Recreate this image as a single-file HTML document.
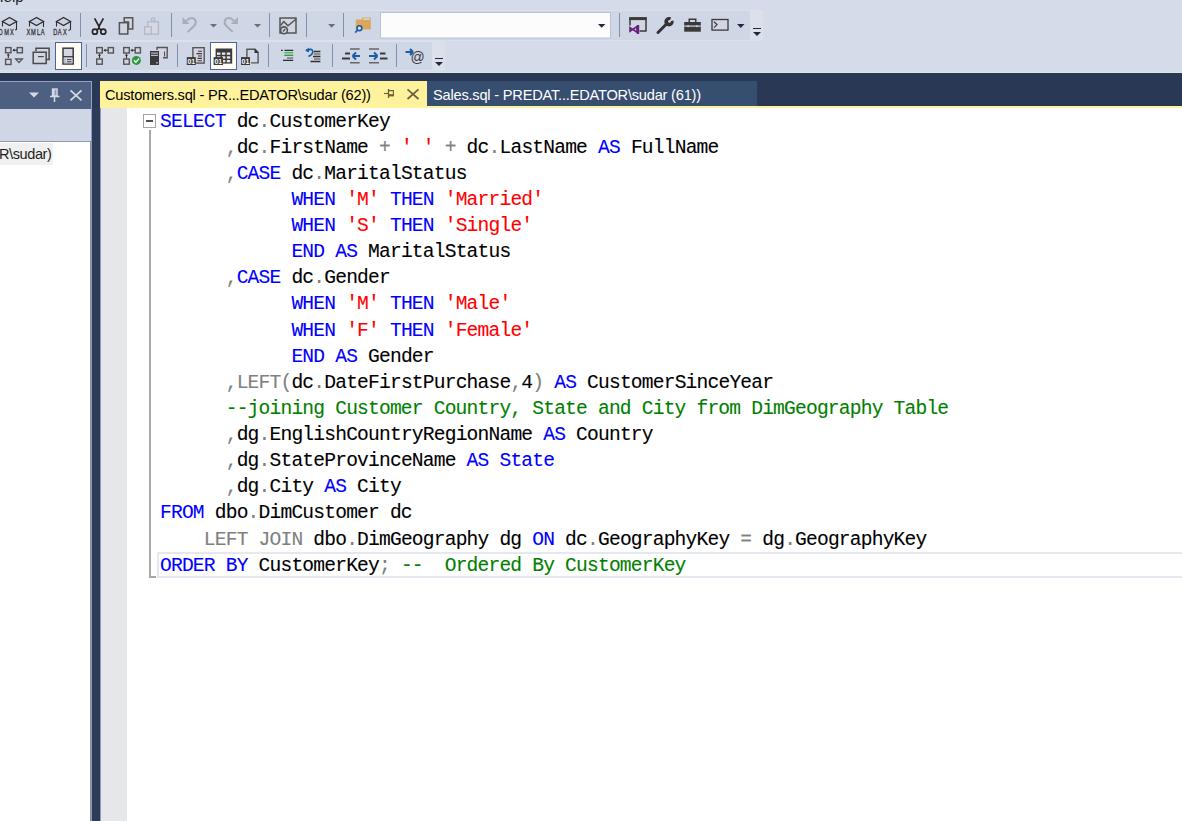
<!DOCTYPE html>
<html><head><meta charset="utf-8">
<style>
html,body{margin:0;padding:0;width:1182px;height:821px;overflow:hidden;background:#d6dbe9;font-family:"Liberation Sans",sans-serif;}
.a{position:absolute;}
#menu{left:-7.3px;top:-12.2px;font-size:15px;color:#1e1e1e;}
#tb1o{left:0;top:10px;width:763px;height:31px;background:#dce0eb;}
#tb1{left:0;top:11px;width:750px;height:29px;background:#cfd6e5;}
#tb2o{left:0;top:41px;width:445px;height:30px;background:#dce0eb;}
#tb2{left:0;top:42px;width:432px;height:28px;background:#cfd6e5;}
#hl{left:0;top:72px;width:1182px;height:1px;background:#dfe3ee;}
#dark{left:0;top:73px;width:1182px;height:748px;background:#293955;}
#pstrip{left:92px;top:108px;width:8px;height:713px;background:#2b3b58;}
#ptitle{left:0;top:81px;width:91px;height:27px;background:#4d6082;border-top:1px solid #94a2c4;border-right:1px solid #94a2c4;box-sizing:content-box;}
#ptool{left:0;top:109px;width:91px;height:32px;background:#cfd6e5;}
#pcont{left:0;top:141px;width:90px;height:680px;background:#fff;border-top:1px solid #8e9bb2;}
#pbr1{left:90px;top:141px;width:1px;height:680px;background:#888c94;}
#pbr2{left:91px;top:108px;width:1px;height:713px;background:#8c9bc0;}
#tabA{left:100px;top:81px;width:327px;height:27px;background:#fff29d;}
#tabB{left:427px;top:81px;width:330px;height:25px;background:#364e6f;}
#ybar{left:100px;top:106px;width:1082px;height:2px;background:#fff29d;}
#ed{left:100px;top:108px;width:1082px;height:713px;background:#fff;}
#edl{left:100px;top:108px;width:1px;height:713px;background:#8a9ac0;}
#marg{left:101px;top:108px;width:26px;height:713px;background:#e6e7e8;}
.tabt{font-size:14.6px;line-height:20px;white-space:nowrap;letter-spacing:-0.2px;}
#code{left:160px;top:108.6px;font-family:"Liberation Mono",monospace;font-size:19.6px;letter-spacing:-0.81px;-webkit-text-stroke:0.1px;line-height:26.13px;white-space:pre;color:#000;margin:0;}
.k{color:#0000ff}.s{color:#ff0000}.c{color:#008000}.g{color:#808080}
#cur{left:157px;top:552px;width:1030px;height:22px;border:2px solid #e6e8f0;}
#foldbox{left:143px;top:114px;width:11px;height:12px;border:1px solid #a5a5a5;background:#fff;}
#foldminus{left:146px;top:120px;width:7px;height:2px;background:#505050;}
#foldline{left:149px;top:130px;width:2px;height:448px;background:#a8a8a8;}
#foldend{left:149px;top:576px;width:7px;height:2px;background:#a8a8a8;}
.sep{position:absolute;width:1px;background:#8796b4;}
</style></head><body>
<div class="a" id="menu">Help</div>
<div class="a" id="tb1o"></div><div class="a" id="tb1"></div>
<div class="a" id="tb2o"></div><div class="a" id="tb2"></div>
<div class="a" id="hl"></div>
<div class="a" id="dark"></div>
<div class="a" id="pstrip"></div>
<div class="a" id="ptitle"></div>
<div class="a" id="ptool"></div>
<div class="a" id="pcont"></div>
<div class="a" id="pbr1"></div><div class="a" id="pbr2"></div>
<div class="a" id="tabA"></div>
<div class="a" id="tabB"></div>
<div class="a" id="ybar"></div>
<div class="a" id="ed"></div>
<div class="a" id="edl"></div>
<div class="a" id="marg"></div>
<div class="a tabt" style="left:105px;top:85px;color:#000;">Customers.sql - PR...EDATOR\sudar (62))</div>
<div class="a tabt" style="left:433px;top:85px;color:#fff;">Sales.sql - PREDAT...EDATOR\sudar (61))</div>
<div class="a" style="left:0;top:143px;width:53px;height:22px;background:#f0f0f0;"></div>
<div class="a" style="left:-1px;top:145px;font-size:14.5px;line-height:18px;letter-spacing:-0.4px;color:#1e1e1e;">R\sudar)</div>
<div class="a" id="cur"></div>
<div class="a" id="foldbox"></div><div class="a" id="foldminus"></div>
<div class="a" id="foldline"></div><div class="a" id="foldend"></div>
<pre class="a" id="code"><span class="k">SELECT</span> dc<span class="g">.</span>CustomerKey
      <span class="g">,</span>dc<span class="g">.</span>FirstName <span class="g">+</span> <span class="s">' '</span> <span class="g">+</span> dc<span class="g">.</span>LastName <span class="k">AS</span> FullName
      <span class="g">,</span><span class="k">CASE</span> dc<span class="g">.</span>MaritalStatus
            <span class="k">WHEN</span> <span class="s">'M'</span> <span class="k">THEN</span> <span class="s">'Married'</span>
            <span class="k">WHEN</span> <span class="s">'S'</span> <span class="k">THEN</span> <span class="s">'Single'</span>
            <span class="k">END</span> <span class="k">AS</span> MaritalStatus
      <span class="g">,</span><span class="k">CASE</span> dc<span class="g">.</span>Gender
            <span class="k">WHEN</span> <span class="s">'M'</span> <span class="k">THEN</span> <span class="s">'Male'</span>
            <span class="k">WHEN</span> <span class="s">'F'</span> <span class="k">THEN</span> <span class="s">'Female'</span>
            <span class="k">END</span> <span class="k">AS</span> Gender
      <span class="g">,LEFT(</span>dc<span class="g">.</span>DateFirstPurchase<span class="g">,</span>4<span class="g">)</span> <span class="k">AS</span> CustomerSinceYear
      <span class="c">--joining Customer Country, State and City from DimGeography Table</span>
      <span class="g">,</span>dg<span class="g">.</span>EnglishCountryRegionName <span class="k">AS</span> Country
      <span class="g">,</span>dg<span class="g">.</span>StateProvinceName <span class="k">AS</span> <span class="k">State</span>
      <span class="g">,</span>dg<span class="g">.</span>City <span class="k">AS</span> City
<span class="k">FROM</span> dbo<span class="g">.</span>DimCustomer dc
    <span class="g">LEFT JOIN</span> dbo<span class="g">.</span>DimGeography dg <span class="k">ON</span> dc<span class="g">.</span>GeographyKey <span class="g">=</span> dg<span class="g">.</span>GeographyKey
<span class="k">ORDER BY</span> CustomerKey<span class="g">;</span> <span class="c">--  Ordered By CustomerKey</span></pre>
<!--ICONS-->
<svg class="a" style="left:0;top:0" width="1182" height="110" viewBox="0 0 1182 110">
<g fill="none" stroke-linecap="butt">
<!-- separators row1 -->
<g stroke="#8290ac" stroke-width="1">
<line x1="80.5" y1="13" x2="80.5" y2="37"/>
<line x1="171.5" y1="13" x2="171.5" y2="37"/>
<line x1="269.5" y1="13" x2="269.5" y2="37"/>
<line x1="306.5" y1="13" x2="306.5" y2="37"/>
<line x1="343.5" y1="13" x2="343.5" y2="37"/>
<line x1="619.5" y1="13" x2="619.5" y2="37"/>
<!-- row2 -->
<line x1="86.5" y1="44" x2="86.5" y2="67"/>
<line x1="177.5" y1="44" x2="177.5" y2="67"/>
<line x1="268.5" y1="44" x2="268.5" y2="67"/>
<line x1="332.5" y1="44" x2="332.5" y2="67"/>
<line x1="396.5" y1="44" x2="396.5" y2="67"/>
</g>
<!-- cubes -->
<g stroke="#2d2d2d" stroke-width="1.1">
<path d="M9.5 17.5 L2.5 21.5 L9.5 25.5 L16.5 21.5 Z" fill="#cdd0e0" stroke-width="1.3"/>
<path d="M2.5 21.5 V26.5 M16.5 21.5 V29.5 L15 30"/>
<path d="M36.5 17.5 L29.5 21.5 L36.5 25.5 L43.5 21.5 Z" fill="#cdd0e0" stroke-width="1.3"/>
<path d="M29.5 21.5 V26.5 M43.5 21.5 V27"/>
<path d="M63.5 17.5 L56.5 21.5 L63.5 25.5 L70.5 21.5 Z" fill="#cdd0e0" stroke-width="1.3"/>
<path d="M56.5 21.5 V26.5 M70.5 21.5 V29.5 L68.5 30.5"/>
</g>
<g fill="#3c3c3c" stroke="#3c3c3c" stroke-width="0.35" font-family="Liberation Sans" font-size="8.4">
<text transform="translate(-1.5 34.8) scale(0.68 1)">D</text>
<text transform="translate(4.3 34.8) scale(0.68 1)">M</text>
<text transform="translate(10.0 34.8) scale(0.68 1)">X</text>
<text transform="translate(26.4 34.8) scale(0.68 1)">X</text>
<text transform="translate(31.0 34.8) scale(0.68 1)">M</text>
<text transform="translate(37.0 34.8) scale(0.68 1)">L</text>
<text transform="translate(40.8 34.8) scale(0.68 1)">A</text>
<text transform="translate(53.2 34.8) scale(0.68 1)">D</text>
<text transform="translate(57.8 34.8) scale(0.68 1)">A</text>
<text transform="translate(63.0 34.8) scale(0.68 1)">X</text>
</g>
<!-- scissors -->
<g stroke="#262626" stroke-width="1.7">
<path d="M94.6 18.4 L99 26.5 L103.4 18.4"/>
<path d="M99 26 V28.5"/>
<circle cx="94.9" cy="31.7" r="2.5" fill="#d8d9e6"/>
<circle cx="103.3" cy="31.7" r="2.5" fill="#d8d9e6"/>
<path d="M96.8 30 L99 28.3 L101.3 30"/>
</g>
<!-- copy -->
<g stroke="#555" stroke-width="1.5">
<path d="M124.2 22 V17.8 H132.7 V29 H128.5 V22 Z" fill="#d4d5e3"/>
<rect x="119.4" y="22.7" width="8.4" height="11.3" fill="#d4d5e3"/>
</g>
<!-- paste disabled -->
<g stroke="#b4b8c6" stroke-width="1.3">
<rect x="147.8" y="21.8" width="10.6" height="12.3" fill="#d5d9e5"/>
<circle cx="153.1" cy="19.6" r="1.8" fill="#d5d9e5"/>
<rect x="144.6" y="26.8" width="6.7" height="7.3" fill="#d5d9e5"/>
</g>
<!-- undo / redo -->
<g stroke="#a9adb9" stroke-width="2">
<path d="M187.7 32 L194.2 25.8 C197 23 196 18 191.5 18 C189.5 18 187.8 19.3 186.5 21"/>
<path d="M232.7 32 L226.2 25.8 C223.4 23 224.4 18 228.9 18 C230.9 18 232.6 19.3 233.9 21"/>
</g>
<g fill="#a9adb9">
<path d="M182.5 17 V24 H189.5 Z"/>
<path d="M237.9 17 V24 H230.9 Z"/>
</g>
<g fill="#6e6e72">
<path d="M210 23.9 H217.1 L213.55 27.6 Z"/>
<path d="M254 23.9 H261.1 L257.55 27.6 Z"/>
<path d="M328.1 23.9 H335.2 L331.65 27.8 Z"/>
</g>
<!-- chart icon -->
<g stroke="#555" stroke-width="1.5">
<rect x="280" y="18" width="16" height="15" fill="#d4d5e3"/>
<path d="M280.5 25.5 L283.8 21.6 L288 25.8 L295.8 19.2"/>
<circle cx="284" cy="30.3" r="3.4" fill="#d4d5e3" stroke-width="1.6"/>
<path d="M283 31.4 L285.2 29"/>
</g>
<!-- folder search -->
<path d="M355.8 19.5 H361.5 L362.5 17.6 H370.8 V29.6 H355.8 Z" fill="#d9a85c"/>
<rect x="363.2" y="18.3" width="6.4" height="1.6" fill="#c8e0cc"/>
<g stroke="#1a5ca8" stroke-width="1.6">
<circle cx="359.4" cy="28.2" r="2.4" fill="#dfe3ee"/>
<path d="M357.6 30 L355.2 32.6"/>
</g>
<!-- combo -->
<rect x="380.5" y="12.5" width="230" height="25.5" fill="#fcfcfc" stroke="#b9c2d6" stroke-width="1"/>
<path d="M598 24 H605.4 L601.7 27.8 Z" fill="#1b2942"/>
<!-- vs window -->
<g stroke="#3a3a3a" stroke-width="1.5">
<path d="M630 25.5 V18 H646 V31 H639.5" fill="#d4d5e3"/>
</g>
<rect x="629.3" y="17.3" width="17.3" height="2.8" fill="#3a3a3a"/>
<path d="M630 27.6 L637 32.2 V26.6 L630 31.2 Z" fill="none" stroke="#68217a" stroke-width="1.6"/>
<rect x="636.8" y="25" width="2.4" height="9" fill="#68217a"/>
<!-- wrench -->
<path d="M658 32.5 L666 24.5" stroke="#333" stroke-width="3" stroke-linecap="round"/>
<circle cx="669" cy="21.8" r="4.7" fill="#333"/>
<path d="M669.3 21.5 L672.2 15.5 L676 17.5 L675.5 20 Z" fill="#cfd6e5"/>
<circle cx="669.5" cy="21.4" r="1.3" fill="#cfd6e5"/>
<!-- toolbox -->
<g fill="#3a3a3a">
<rect x="684.2" y="22" width="16.6" height="9.7"/>
<path d="M688.5 22 V18.6 H696.5 V22 H695 V20 H690 V22 Z"/>
</g>
<rect x="684.2" y="25.5" width="16.6" height="1.2" fill="#cfd6e5"/>
<rect x="687.5" y="25" width="1.2" height="2.2" fill="#cfd6e5"/><rect x="696.3" y="25" width="1.2" height="2.2" fill="#cfd6e5"/>
<!-- terminal -->
<rect x="712" y="19.5" width="16" height="10.6" fill="#d4d5e3" stroke="#3a3a3a" stroke-width="1.3"/>
<path d="M714 21.7 L717 24.6 L714 27.6" stroke="#3a3a3a" stroke-width="1.2"/>
<path d="M737 24 H744.5 L740.75 28 Z" fill="#1b2942"/>
<!-- overflow row1 -->
<rect x="753" y="28" width="8" height="1" fill="#1b2942"/>
<path d="M753 32 H761 L757 36 Z" fill="#1b2942"/>

<!-- ROW 2 -->
<!-- plan diamond -->
<g stroke="#555" stroke-width="1.4" fill="#d4d5e3">
<rect x="5.6" y="47.6" width="5.4" height="5.2"/>
<rect x="17.2" y="47.6" width="5.2" height="5.2"/>
<rect x="5.6" y="59.3" width="5.4" height="5.2"/>
</g>
<path d="M19 62.6 L15.6 59 H22.4 Z" fill="none" stroke="#555" stroke-width="1.3"/>
<g stroke="#333" stroke-width="1.1"><path d="M13 50.2 H17"/><path d="M8.3 54 V58"/></g>
<g fill="#333"><path d="M12.4 50.2 L14.6 48.6 V51.8 Z"/><path d="M8.3 53.4 L6.8 55.6 H9.8 Z"/></g>
<!-- windows -->
<g stroke="#4a4a4a" stroke-width="1.5">
<path d="M36 51 V48.3 H49.1 V59.6 H46"/>
<rect x="33.2" y="52.2" width="13" height="11.3" fill="#d4d5e3"/>
<path d="M38 56.6 H43.8" stroke-width="1.2"/>
</g>
<!-- selected button 1 -->
<rect x="55.5" y="42.5" width="26" height="27" fill="#fffcf4" stroke="#4b6597" stroke-width="1"/>
<g stroke="#3a3a3a" stroke-width="1.5">
<rect x="63" y="48.2" width="10.2" height="15.8" fill="#d4d5e3"/>
<path d="M63 56.8 H73.2"/>
</g>
<rect x="63.8" y="57.6" width="8.6" height="5.7" fill="#d4d5e3"/>
<g stroke="#3a3a3a" stroke-width="1"><path d="M67 59.6 H71.5 M67 61.8 H71.5"/></g>
<g fill="#777"><rect x="64.5" y="59.2" width="1" height="1"/><rect x="64.5" y="61.4" width="1" height="1"/></g>
<!-- plan x2 -->
<g stroke="#555" stroke-width="1.4" fill="#d4d5e3">
<rect x="96.7" y="47.6" width="5.6" height="5.4"/>
<rect x="108.2" y="47.6" width="5.2" height="5.4"/>
<rect x="96.7" y="59" width="5.6" height="5.2"/>
<rect x="123.7" y="47.6" width="5.6" height="5.4"/>
<rect x="135.2" y="47.6" width="5.2" height="5.4"/>
<rect x="123.7" y="59" width="5.6" height="5.2"/>
</g>
<g stroke="#333" stroke-width="1.1"><path d="M104 50.3 H108 M99.5 54.5 V58.5 M131 50.3 H135 M126.5 54.5 V58.5"/></g>
<g fill="#333"><path d="M103.4 50.3 L105.6 48.7 V51.9 Z M99.5 53.6 L98 55.8 H101 Z M130.4 50.3 L132.6 48.7 V51.9 Z M126.5 53.6 L125 55.8 H128 Z"/></g>
<circle cx="136.4" cy="60.4" r="4.5" fill="#2a9a3b"/>
<path d="M134 60.3 L135.9 62.2 L139 58.6" stroke="#fff" stroke-width="1.4"/>
<!-- server + chart -->
<path d="M157 50 V47.5 H167.2 V57.8 H163" stroke="#555" stroke-width="1.4" fill="#d4d5e3"/>
<path d="M164.6 51.5 V56.5" stroke="#444" stroke-width="1"/>
<rect x="150" y="51" width="9" height="14" fill="#3a3a3a"/>
<rect x="151" y="52.5" width="7" height="1.2" fill="#b8bcc8"/>
<rect x="151" y="54.8" width="7" height="1.2" fill="#b8bcc8"/>
<rect x="156.2" y="62" width="1.5" height="1.5" fill="#b8bcc8"/>
<!-- results to text -->
<rect x="192.9" y="47.7" width="11.3" height="15.4" fill="#d4d5e3" stroke="#555" stroke-width="1.4"/>
<g stroke="#3a3a3a" stroke-width="1.1"><path d="M198 51.2 H202 M196.5 53.6 H202 M198 56 H202 M197.5 58.4 H202 M197.5 60.8 H202"/></g>
<!-- selected button 2 -->
<rect x="210.5" y="42.5" width="26" height="27" fill="#fffcf4" stroke="#4b6597" stroke-width="1"/>
<rect x="215.6" y="48.5" width="16.6" height="15.1" fill="#3a3a3a"/>
<g fill="#e8e8ee">
<rect x="217" y="52.5" width="3.4" height="2.3"/><rect x="221.9" y="52.5" width="3.4" height="2.3"/><rect x="226.8" y="52.5" width="3.4" height="2.3"/>
<rect x="217" y="56.3" width="3.4" height="2.3"/><rect x="221.9" y="56.3" width="3.4" height="2.3"/><rect x="226.8" y="56.3" width="3.4" height="2.3"/>
<rect x="221.9" y="60" width="3.4" height="2.3"/><rect x="226.8" y="60" width="3.4" height="2.3"/>
</g>
<!-- file -->
<path d="M246.9 57 V49.2 H255 L258.1 52.3 V62.9 H251" fill="none" stroke="#555" stroke-width="1.4"/>
<path d="M254.5 48.6 L258.8 52.9 H254.5 Z" fill="#333"/>
<!-- 01 badges -->
<g fill="#3a3a3a">
<rect x="186.8" y="57.1" width="9" height="7.9"/>
<rect x="213.6" y="57.1" width="9.4" height="7.9"/>
<rect x="241" y="57.1" width="9" height="7.9"/>
</g>
<g fill="#fff" font-family="Liberation Sans" font-weight="bold" font-size="7.6">
<text x="187.4" y="64" textLength="7.8" lengthAdjust="spacingAndGlyphs">01</text>
<text x="214.4" y="64" textLength="7.8" lengthAdjust="spacingAndGlyphs">01</text>
<text x="241.6" y="64" textLength="7.8" lengthAdjust="spacingAndGlyphs">01</text>
</g>
<!-- comment -->
<g stroke-width="1.3">
<path d="M281 50.4 H282.8 M284.5 50.4 H293.2 M283 60.4 H293.2" stroke="#2e2e2e"/>
<path d="M284.3 52.7 H293.2" stroke="#5cb85c" stroke-width="1.6"/>
<path d="M284.3 55.3 H293.2" stroke="#2a9a3b"/>
<path d="M287 58 H293.2" stroke="#777" stroke-width="1.5"/>
</g>
<!-- uncomment -->
<path d="M307 51.5 C308.5 48.5 313 48.5 312.8 52 C312.7 54 310.5 55.5 308.5 56.5" stroke="#1a5ca8" stroke-width="1.7"/>
<path d="M305 50 L309.3 47.8 L308.8 52.6 Z" fill="#1a5ca8"/>
<g stroke-width="1.3">
<path d="M314 51.5 H320.4 M313 56.5 H320.4 M310.5 61.5 H320.4" stroke="#2e2e2e"/>
<path d="M314 53.9 H320.4 M314 59 H320.4" stroke="#777" stroke-width="1.5"/>
</g>
<!-- indent -->
<g stroke="#666" stroke-width="1.5">
<path d="M350 49 H359.7 M350 62.7 H359.7 M369 49 H379 M369 62.7 H379"/>
</g>
<g stroke="#3a3a3a" stroke-width="2">
<path d="M345 53.6 H350 M342 58.5 H350 M380 53.6 H385.5 M380 58.5 H387.5"/>
</g>
<g stroke="#1a5ca8" stroke-width="2">
<path d="M352.5 56 H360 M352.5 56 L356 52.5 M352.5 56 L356 59.5"/>
<path d="M377.5 56 H369 M377.5 56 L374 52.5 M377.5 56 L374 59.5"/>
<path d="M405.5 52 H413 M413 52 L410 49 M413 52 L410 55"/>
</g>
<text x="410.5" y="61.5" font-family="Liberation Sans" font-size="14" fill="#3a3a3a">@</text>
<!-- overflow row2 -->
<rect x="435" y="58" width="8" height="1" fill="#1b2942"/>
<path d="M435 62 H443 L439 66 Z" fill="#1b2942"/>

<!-- panel title icons -->
<path d="M29 92.5 H39 L34 97.5 Z" fill="#d4d9e4"/>
<g stroke="#d4d9e4">
<path d="M50 96.5 H59.5 M54.5 96.5 V102" stroke-width="1.5"/>
<path d="M70.5 90.3 L81.5 100.3 M81.5 90.3 L70.5 100.3" stroke-width="1.8"/>
</g>
<path d="M51.8 88.3 H57.8 V96 H51.8 Z" fill="#d4d9e4"/>
<rect x="54.6" y="89.8" width="1.8" height="5.4" fill="#8e9ab4"/>
<!-- tab icons -->
<g stroke="#6b5f3c">
<path d="M384 93.5 H388.5" stroke-width="1.1"/>
<path d="M388.5 89 V98" stroke-width="1.3"/>
<path d="M389 90.6 H393.4 V95.8 H389" stroke-width="1.1"/>
<path d="M389 95.2 H394" stroke-width="2"/>
<path d="M407.5 89.3 L418.5 99 M418.5 89.3 L407.5 99" stroke-width="1.7"/>
</g>
</g>
</svg>

</body></html>
